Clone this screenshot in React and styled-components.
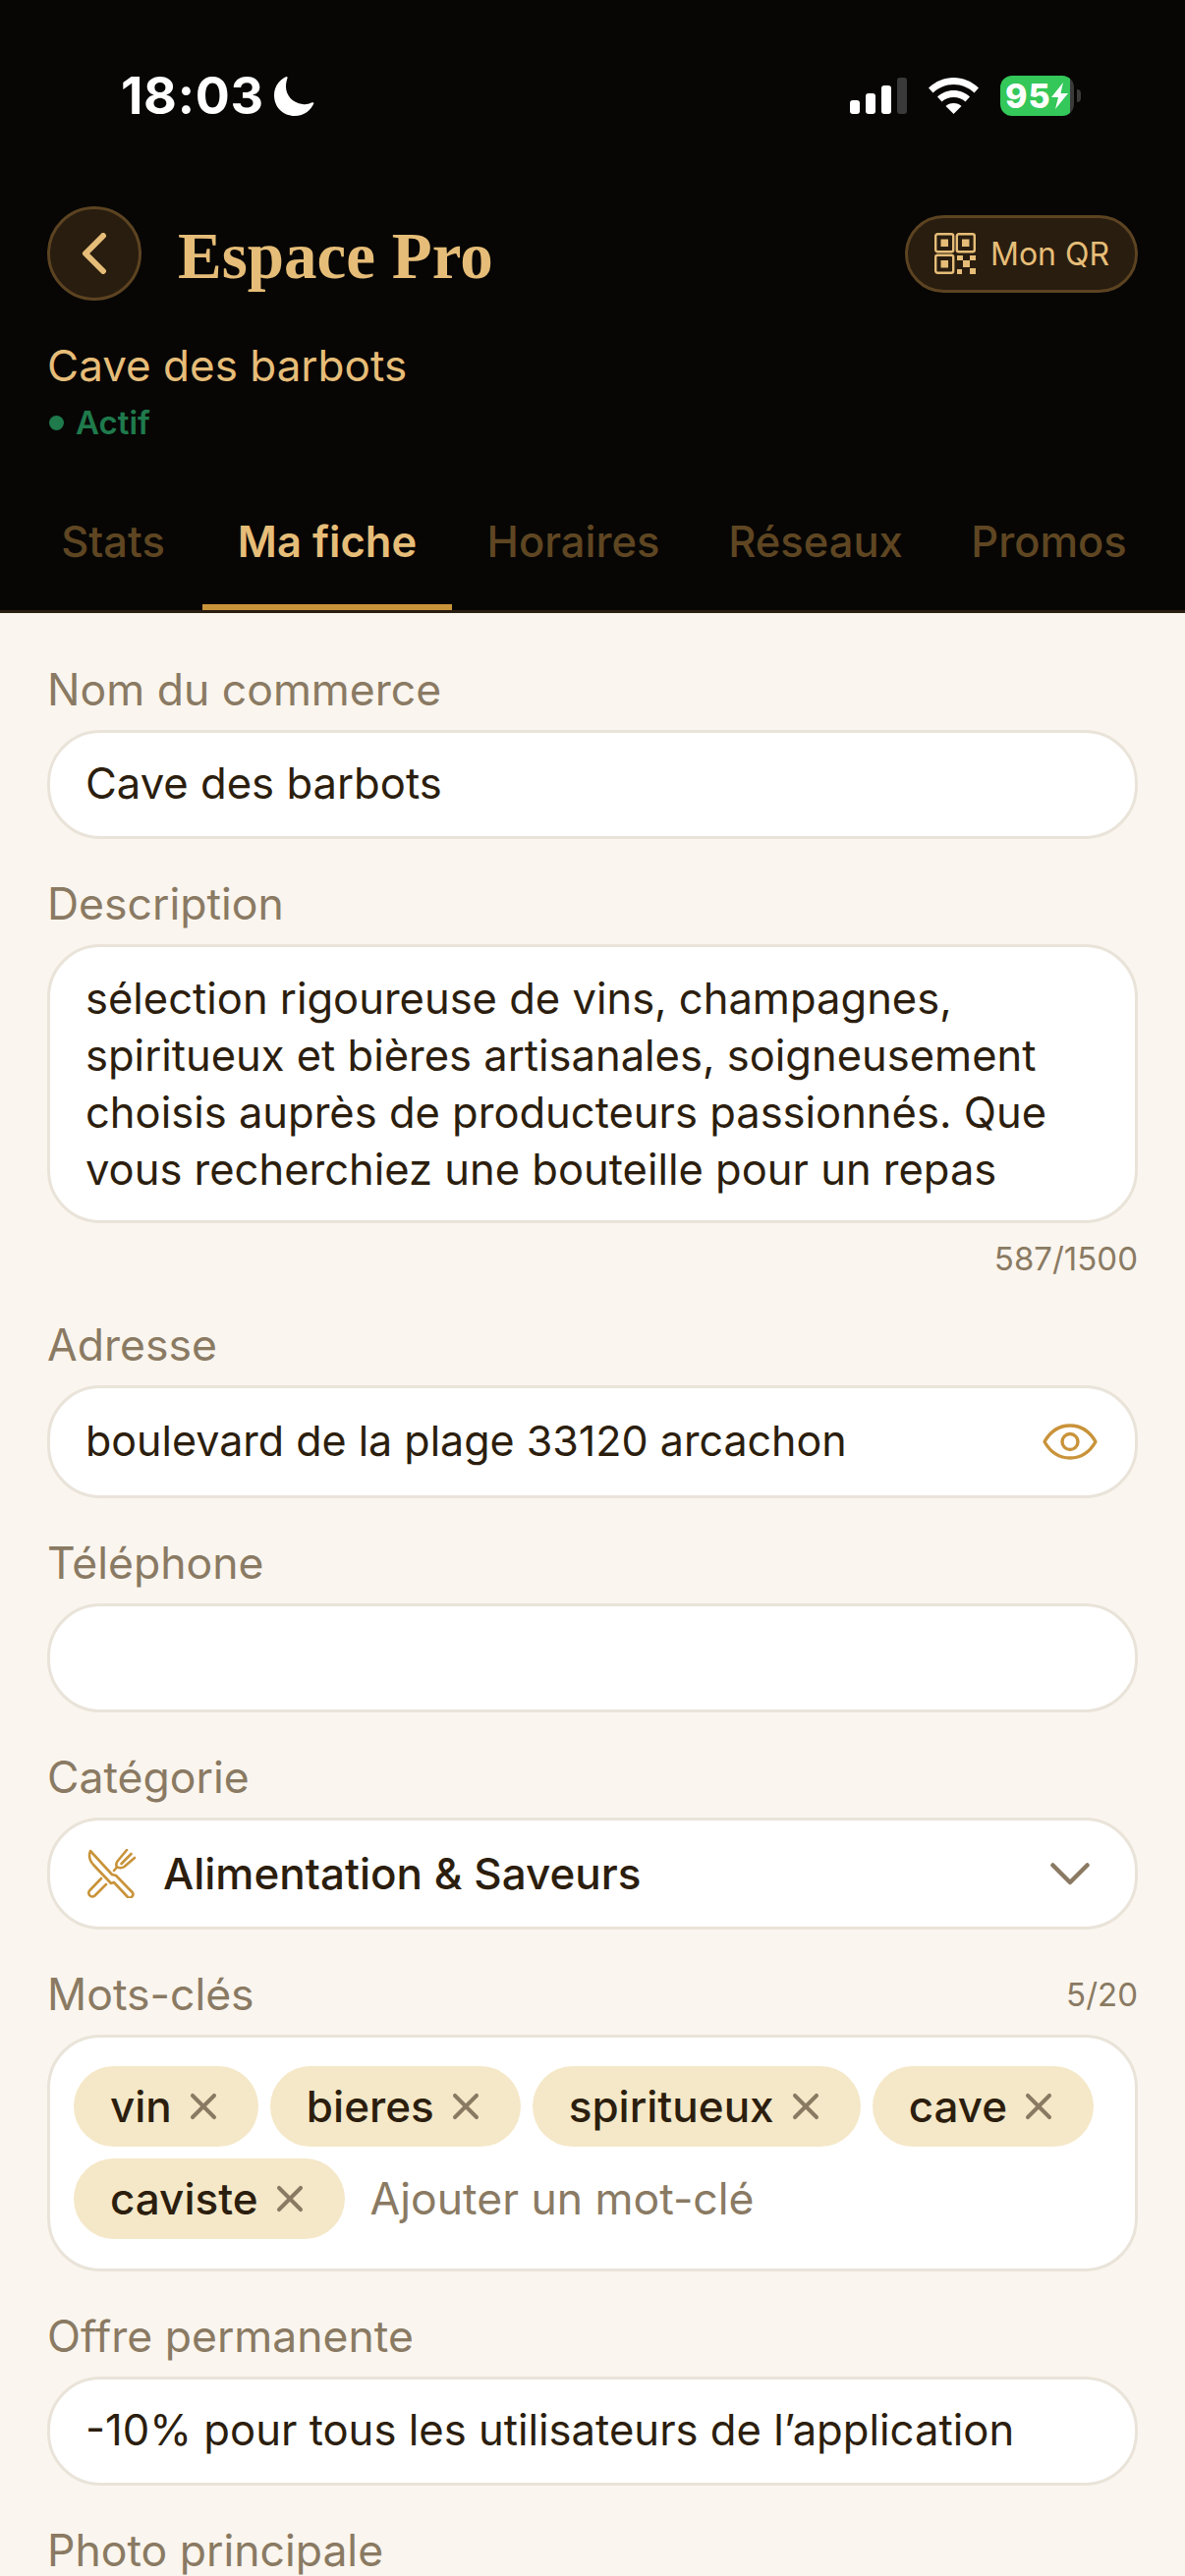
import React from 'react'
import styled, { createGlobalStyle } from 'styled-components'
import { X } from 'lucide-react'

const GlobalStyle = createGlobalStyle`
    html, body {
        margin: 0;
        padding: 0;
        background: #faf5ee;
    }
    * {
        box-sizing: border-box;
    }
`

const Screen = styled.div`
    width: 1206px;
    height: 2622px;
    overflow: hidden;
    background: #faf5ee;
    font-family: Inter, "Liberation Sans", sans-serif;
`

const Header = styled.header`
    background: #070605;
    border-bottom: 3px solid #2a1e10;
`

const StatusBar = styled.div`
    height: 210px;
    padding: 77px 113px 0 123px;
    display: flex;
    justify-content: space-between;
    align-items: flex-start;
`

const TimeGroup = styled.div`
    display: flex;
    align-items: center;
    gap: 9px;
    height: 41px;
`

const Time = styled.span`
    font-size: 52px;
    line-height: 41px;
    font-weight: 700;
    color: #fff;
    letter-spacing: 0.7px;
`

const StatusIcons = styled.div`
    display: flex;
    align-items: center;
    gap: 22px;
    height: 41px;
`

const Battery = styled.div`
    width: 75px;
    height: 41px;
    border-radius: 12px;
    background: linear-gradient(90deg, #34c759 0 71px, #3a3a3a 71px);
    display: flex;
    align-items: center;
    padding-left: 5px;
    position: relative;
    color: #fff;
    font-size: 34px;
    font-weight: 800;
    letter-spacing: 1px;

    &::after {
        content: '';
        position: absolute;
        right: -7px;
        top: 14px;
        width: 4px;
        height: 13px;
        border-radius: 0 4px 4px 0;
        background: #3a3a3a;
    }
`

const TitleRow = styled.div`
    padding: 0 48px;
    height: 96px;
    display: flex;
    align-items: center;
    gap: 37px;
`

const BackButton = styled.button`
    width: 96px;
    height: 96px;
    flex: none;
    padding: 0;
    border-radius: 50%;
    border: 3px solid #5c4321;
    background: #291d0f;
    display: flex;
    align-items: center;
    justify-content: center;
`

const Title = styled.h1`
    margin: 4px 0 0 0;
    flex: 1;
    font-family: "Liberation Serif", serif;
    font-weight: 700;
    font-size: 67px;
    line-height: 80px;
    color: #e6bd78;
`

const QrButton = styled.button`
    width: 237px;
    height: 79px;
    padding: 0 0 0 27px;
    border-radius: 40px;
    border: 3px solid #5c4321;
    background: #291d0f;
    display: flex;
    align-items: center;
    gap: 15px;
    color: #e6bd78;
    font-family: inherit;
    font-size: 32px;
`

const ShopName = styled.div`
    margin: 41px 0 0 48px;
    height: 50px;
    font-size: 44px;
    line-height: 50px;
    color: #e6bd78;
`

const ShopStatus = styled.div`
    margin: 13px 0 0 50px;
    height: 40px;
    font-size: 33px;
    line-height: 40px;
    font-weight: 600;
    color: #1f7a4c;
    display: flex;
    align-items: center;
    gap: 12px;

    &::before {
        content: '';
        width: 15px;
        height: 15px;
        border-radius: 50%;
        background: #1f7a4c;
    }
`

const Tabs = styled.nav`
    margin-top: 31px;
    height: 140px;
    padding: 0 24px;
    display: flex;
`

const Tab = styled.div`
    flex: none;
    width: ${(p) => p.$width}px;
    padding-top: 45px;
    text-align: center;
    font-size: 43.5px;
    line-height: 50px;
    font-weight: ${(p) => (p.$active ? 600 : 500)};
    color: ${(p) => (p.$active ? '#e6bd78' : '#5f4622')};
    border-bottom: 6px solid ${(p) => (p.$active ? '#c9933a' : 'transparent')};
`

const Form = styled.main`
    padding: 53px 48px 0;
    display: flex;
    flex-direction: column;
    gap: 41px;
`

const Field = styled.section`
    display: flex;
    flex-direction: column;
`

const LabelRow = styled.div`
    height: 50px;
    margin-bottom: 16px;
    display: flex;
    justify-content: space-between;
    align-items: center;
`

const Label = styled.label`
    font-size: 44.5px;
    line-height: 50px;
    color: #8a7a63;
`

const Counter = styled.span`
    font-size: 33px;
    line-height: 40px;
    color: #8a7a63;
`

const FootCounter = styled(Counter)`
    display: block;
    text-align: right;
    margin-top: 16px;
    margin-bottom: 2px;
`

const InputBox = styled.div`
    height: ${(p) => p.$height || 111}px;
    padding: 0 38px 0 36px;
    background: #fff;
    border: 3px solid #e9e3d9;
    border-radius: 54px;
    display: flex;
    align-items: center;
    font-size: ${(p) => p.$size || 43.6}px;
    color: #2c1e0e;
`

const InputText = styled.span`
    flex: 1;
    white-space: nowrap;
    margin-top: -3px;
`

const TextArea = styled.div`
    height: 284px;
    padding: 23px 36px 0;
    background: #fff;
    border: 3px solid #e9e3d9;
    border-radius: 54px;
    font-size: 43.5px;
    line-height: 58px;
    color: #2c1e0e;
    overflow: hidden;
`

const SelectText = styled(InputText)`
    margin-left: 27px;
    margin-top: -1px;
    font-size: 44px;
    font-weight: 450;
`

const TagBox = styled.div`
    height: 241px;
    padding: 29px 20px 0 24px;
    background: #fff;
    border: 3px solid #e9e3d9;
    border-radius: 54px;
    display: flex;
    flex-wrap: wrap;
    align-content: flex-start;
    gap: 12px;
`

const Tag = styled.span`
    height: 82px;
    padding: 0 34px 0 37px;
    border-radius: 41px;
    background: #f5e8c8;
    display: flex;
    align-items: center;
    gap: 10px;
    font-size: 44px;
    font-weight: 450;
    color: #2c1e0e;

    svg {
        flex: none;
    }
`

const TagPlaceholder = styled.span`
    margin-left: 14px;
    height: 82px;
    display: flex;
    align-items: center;
    font-size: 44.5px;
    color: #8a7a63;
`

function BackIcon() {
    return (
        <svg width="26" height="42" viewBox="0 0 26 42" fill="none">
            <path d="M22 3 4 21l18 18" stroke="#e6bd78" strokeWidth="6" strokeLinecap="round" strokeLinejoin="round" />
        </svg>
    )
}

function MoonIcon() {
    return (
        <svg width="42" height="42" viewBox="0 0 42 42">
            <path d="M13.5 1C8 3.500 1 9.500 1 20c0 12 9 21 21 21 9.500 0 16.500-6 19.500-13-.5-1-1.500-1-2.500-.5-3 1.500-6 2-9 1.500C19 27.500 13 19.500 13 11c0-3 .5-5.500 1.500-8.500.2-1-.2-1.600-1-1.500Z" fill="#fff" />
        </svg>
    )
}

function SignalIcon() {
    return (
        <svg width="58" height="37" viewBox="0 0 58 37">
            <rect x="0" y="23" width="10" height="14" rx="3" fill="#fff" />
            <rect x="16" y="16" width="10" height="21" rx="3" fill="#fff" />
            <rect x="32" y="8" width="10" height="29" rx="3" fill="#fff" />
            <rect x="48" y="0" width="10" height="37" rx="3" fill="#3a3a3a" />
        </svg>
    )
}

function WifiIcon() {
    return (
        <svg width="51" height="37" viewBox="0 0 51 37">
            <path d="M25.500 0C16 0 7.500 3.500 0 10.500l4.500 5C10.500 10 17.500 7 25.500 7s15 3 21 8.500l4.500-5C43.500 3.500 35 0 25.500 0Z" fill="#fff" />
            <path d="M25.500 13c-6.500 0-12 2.500-16.500 6.500l4.500 5c3.200-3 7.200-4.500 12-4.500s8.800 1.500 12 4.500l4.500-5C37.500 15.500 32 13 25.500 13Z" fill="#fff" />
            <path d="M25.500 26c-3.500 0-6 1-8 3l8 8 8-8c-2-2-4.500-3-8-3Z" fill="#fff" />
        </svg>
    )
}

function BoltIcon() {
    return (
        <svg width="17" height="27" viewBox="0 0 17 27" style={{ flex: 'none' }}>
            <path d="M12 0 0 15h7L4 27l13-16H9.500Z" fill="#fff" />
        </svg>
    )
}

function QrIcon() {
    return (
        <svg width="42" height="42" viewBox="0 0 42 42" fill="none" style={{ flex: 'none' }}>
            <rect x="1.200" y="1.200" width="18" height="18" rx="2" stroke="#e6bd78" strokeWidth="2.400" />
            <rect x="22.800" y="1.200" width="18" height="18" rx="2" stroke="#e6bd78" strokeWidth="2.400" />
            <rect x="1.200" y="22.800" width="18" height="18" rx="2" stroke="#e6bd78" strokeWidth="2.400" />
            <rect x="6.500" y="6.500" width="7.500" height="7.500" fill="#e6bd78" />
            <rect x="28" y="6.500" width="7.500" height="7.500" fill="#e6bd78" />
            <rect x="6.500" y="28" width="7.500" height="7.500" fill="#e6bd78" />
            <rect x="23" y="23" width="6" height="5" fill="#e6bd78" />
            <rect x="36" y="23" width="6" height="5" fill="#e6bd78" />
            <rect x="29" y="28" width="7" height="7" fill="#e6bd78" />
            <rect x="23" y="37" width="5" height="5" fill="#e6bd78" />
            <rect x="36" y="36" width="6" height="6" fill="#e6bd78" />
        </svg>
    )
}

function EyeIcon() {
    return (
        <svg width="56" height="37" viewBox="0 0 56 37" fill="none" style={{ flex: 'none' }}>
            <path d="M2 18.500C8 8 17 2 28 2s20 6 26 16.500C48 29 39 35 28 35S8 29 2 18.500Z" stroke="#c9933a" strokeWidth="3.400" strokeLinejoin="round" />
            <circle cx="28" cy="18.500" r="8" stroke="#c9933a" strokeWidth="3.400" />
        </svg>
    )
}

function ChevronIcon() {
    return (
        <svg width="40" height="23" viewBox="0 0 40 23" fill="none" style={{ flex: 'none', marginRight: 8 }}>
            <path d="M2.500 2.500 20 20 37.500 2.500" stroke="#8a7a63" strokeWidth="4.500" strokeLinecap="round" strokeLinejoin="round" />
        </svg>
    )
}

function CutleryIcon() {
    return (
        <svg width="50" height="50" viewBox="0 0 50 50" fill="none" style={{ flex: 'none', marginLeft: 2 }}>
            <g stroke="#c9933a" strokeWidth="2.600" strokeLinecap="round" strokeLinejoin="round">
                <path d="M3 2 25 26l4 1 17 17.500a3.500 3.500 0 0 1-5 4.500L27 34l-3 1L6 16C1.500 11 1 7 3 2Z" />
                <path d="M14 30 2.500 42a3.500 3.500 0 0 0 5 5.500L19 36" />
                <path d="M40 1 30.500 12.500c-1.500 2-1.500 4-.5 6L27 22" />
                <path d="M48 9 37.500 18c-2 1.500-4.500 1.500-7.500.5" />
                <path d="M44.500 5 34.500 15" />
            </g>
        </svg>
    )
}

const tabs = [
    { name: 'Stats', width: 182 },
    { name: 'Ma fiche', width: 254, active: true },
    { name: 'Horaires', width: 247 },
    { name: 'Réseaux', width: 246 },
    { name: 'Promos', width: 229 },
]

const keywords = ['vin', 'bieres', 'spiritueux', 'cave', 'caviste']

export default function App() {
    return (
        <Screen>
            <GlobalStyle />
            <Header>
                <StatusBar>
                    <TimeGroup>
                        <Time>18:03</Time>
                        <MoonIcon />
                    </TimeGroup>
                    <StatusIcons>
                        <SignalIcon />
                        <WifiIcon />
                        <Battery>
                            95
                            <BoltIcon />
                        </Battery>
                    </StatusIcons>
                </StatusBar>
                <TitleRow>
                    <BackButton>
                        <BackIcon />
                    </BackButton>
                    <Title>Espace Pro</Title>
                    <QrButton>
                        <QrIcon />
                        Mon QR
                    </QrButton>
                </TitleRow>
                <ShopName>Cave des barbots</ShopName>
                <ShopStatus>Actif</ShopStatus>
                <Tabs>
                    {tabs.map((tab) => (
                        <Tab key={tab.name} $width={tab.width} $active={tab.active}>
                            {tab.name}
                        </Tab>
                    ))}
                </Tabs>
            </Header>
            <Form>
                <Field>
                    <LabelRow>
                        <Label>Nom du commerce</Label>
                    </LabelRow>
                    <InputBox>
                        <InputText>Cave des barbots</InputText>
                    </InputBox>
                </Field>
                <Field>
                    <LabelRow>
                        <Label>Description</Label>
                    </LabelRow>
                    <TextArea>
                        sélection rigoureuse de vins, champagnes,
                        <br />
                        spiritueux et bières artisanales, soigneusement
                        <br />
                        choisis auprès de producteurs passionnés. Que
                        <br />
                        vous recherchiez une bouteille pour un repas
                    </TextArea>
                    <FootCounter>587/1500</FootCounter>
                </Field>
                <Field>
                    <LabelRow>
                        <Label>Adresse</Label>
                    </LabelRow>
                    <InputBox $height={115} $size={43}>
                        <InputText>boulevard de la plage 33120 arcachon</InputText>
                        <EyeIcon />
                    </InputBox>
                </Field>
                <Field>
                    <LabelRow>
                        <Label>Téléphone</Label>
                    </LabelRow>
                    <InputBox />
                </Field>
                <Field>
                    <LabelRow>
                        <Label>Catégorie</Label>
                    </LabelRow>
                    <InputBox $height={114}>
                        <CutleryIcon />
                        <SelectText>Alimentation &amp; Saveurs</SelectText>
                        <ChevronIcon />
                    </InputBox>
                </Field>
                <Field>
                    <LabelRow>
                        <Label>Mots-clés</Label>
                        <Counter>5/20</Counter>
                    </LabelRow>
                    <TagBox>
                        {keywords.map((word) => (
                            <Tag key={word}>
                                {word}
                                <X size={44} color="#8a7a63" strokeWidth={2.2} />
                            </Tag>
                        ))}
                        <TagPlaceholder>Ajouter un mot-clé</TagPlaceholder>
                    </TagBox>
                </Field>
                <Field>
                    <LabelRow>
                        <Label>Offre permanente</Label>
                    </LabelRow>
                    <InputBox>
                        <InputText>-10% pour tous les utilisateurs de l’application</InputText>
                    </InputBox>
                </Field>
                <Field>
                    <LabelRow>
                        <Label>Photo principale</Label>
                    </LabelRow>
                </Field>
            </Form>
        </Screen>
    )
}
